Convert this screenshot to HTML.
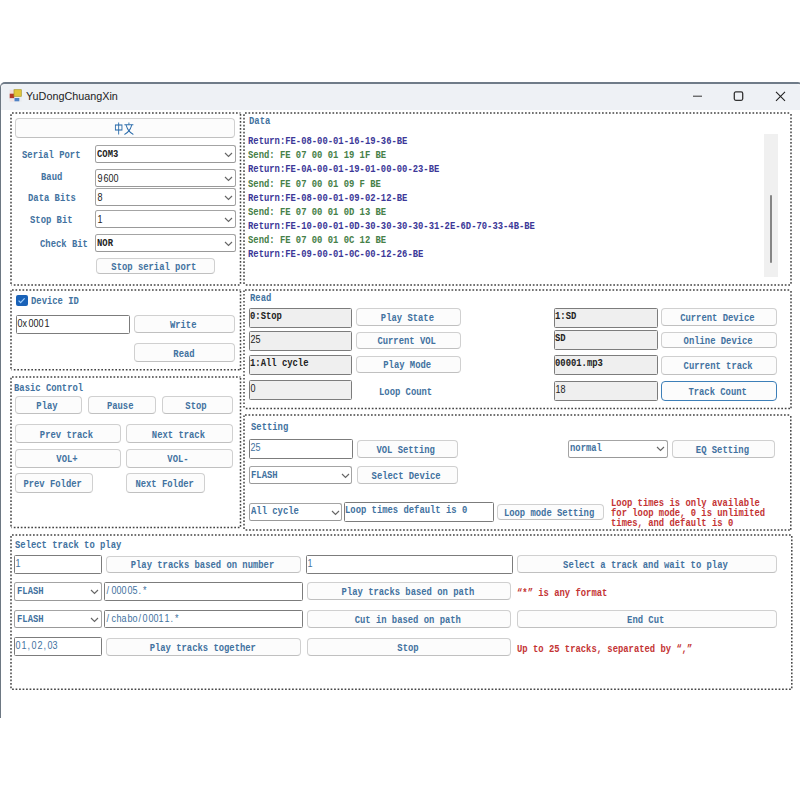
<!DOCTYPE html><html><head><meta charset="utf-8"><style>
*{margin:0;padding:0;box-sizing:border-box}
html,body{width:800px;height:800px;background:#fff;overflow:hidden;position:relative}
#root{position:absolute;left:0;top:0;width:800px;height:800px}
body{font-family:"Liberation Mono",monospace;font-size:10.8px;letter-spacing:0px}
.win{position:absolute;left:0;top:81.5px;width:802.5px;height:636.5px;border:1.3px solid #6d7883;border-top:2px solid #6f7b88;border-bottom:none;border-radius:5px 5px 0 0;background:#fff}
.title{position:absolute;left:1px;top:83.5px;width:800px;height:26.5px;background:#eef1f5;border-radius:5px 5px 0 0}
.ttl{position:absolute;left:26px;top:89px;font-family:"Liberation Sans",sans-serif;font-size:10.8px;letter-spacing:0;color:#222;line-height:14px}
.gs{position:absolute}
.grpold{position:absolute;
background:
 repeating-linear-gradient(90deg,#505050 0 1.6px,transparent 1.6px 3.55px) left top/100% 1.5px no-repeat,
 repeating-linear-gradient(90deg,#505050 0 1.6px,transparent 1.6px 3.55px) left bottom/100% 1.5px no-repeat,
 repeating-linear-gradient(180deg,#505050 0 1.6px,transparent 1.6px 3.55px) left top/1.5px 100% no-repeat,
 repeating-linear-gradient(180deg,#505050 0 1.6px,transparent 1.6px 3.55px) right top/1.5px 100% no-repeat;}
.btn{position:absolute;border:1px solid #d0d0d0;border-bottom-color:#c0c0c0;border-radius:4px;background:#fcfcfc;display:flex;align-items:center;justify-content:center;color:#4272a0;font-weight:bold;white-space:pre}
.btn.foc{border:1.5px solid #3d7fb8}
.btn span{line-height:12px;position:relative;top:1px;left:-1.3px;display:inline-block;transform:scaleX(0.82);transform-origin:50% 50%}
.tb{position:absolute;border:1.5px solid #7c7c7c;border-radius:1.5px;background:#fff;display:flex;align-items:flex-start;white-space:pre}
.bd span{font-weight:bold}
.ms span{transform:none!important;font-family:'Liberation Sans',sans-serif;font-size:10.6px}
.ms i{font-style:normal;display:inline-block;width:5.32px;text-align:center;transform:scaleX(0.85)}
.tb.ro{background:#efefef}
.tb span{position:relative;left:0px;top:1px;line-height:12px;display:inline-block;transform:scaleX(0.82);transform-origin:0 50%}
.cb{position:absolute;border:1.2px solid #a4a4a4;border-bottom-color:#999;border-radius:2.5px;background:#fff;white-space:pre}
.cb span{position:absolute;left:1.3px;top:1.8px;line-height:12px;transform:scaleX(0.82);transform-origin:0 50%}
.chev{position:absolute;right:1.6px;top:50%;margin-top:-2.3px}
.lab{position:absolute;white-space:pre;line-height:12px;font-weight:bold;transform:scaleX(0.82);transform-origin:0 50%}
.red{position:absolute;white-space:pre;line-height:9.7px;font-weight:bold;color:#c43434;transform:scaleX(0.82);transform-origin:0 0}
</style></head><body><div id="root">
<div class="win"></div><div class="title"></div>
<svg style="position:absolute;left:9px;top:89px" width="13" height="13" viewBox="0 0 13 13">
<rect x="0.3" y="0.5" width="12.4" height="12.3" fill="#e9ecef"/>
<rect x="0.8" y="1" width="4.6" height="4" fill="#f2dede"/>
<rect x="0.7" y="4.7" width="4.5" height="4.6" fill="#b53a28"/>
<rect x="0.8" y="9.5" width="4.6" height="3" fill="#f4e4e4"/>
<rect x="5" y="0.7" width="7.3" height="6.6" fill="#e3c63a" stroke="#a89a2a" stroke-width="0.7"/>
<rect x="5.5" y="9" width="4.8" height="3.3" fill="#4f82c6"/></svg>
<div class="ttl">YuDongChuangXin</div>
<svg style="position:absolute;left:690px;top:88px" width="100" height="16" viewBox="0 0 100 16">
<line x1="3" y1="8.2" x2="12" y2="8.2" stroke="#333" stroke-width="1"/>
<rect x="44.3" y="3.9" width="8.4" height="8.4" rx="1.5" fill="none" stroke="#333" stroke-width="1.3"/>
<path d="M86 3.8 L95 12.8 M95 3.8 L86 12.8" stroke="#222" stroke-width="1.1"/></svg>
<svg class="gs" style="left:8.6px;top:111px" width="233.5" height="175.9"><g stroke="#444" stroke-width="1.5" stroke-dasharray="1.7 1.8" fill="none"><path d="M3 2 H231.5 M231.5 3 V173.9 M230.5 173.9 H2.5 M2 172.9 V2.5"/></g></svg>
<svg class="gs" style="left:8.6px;top:288.3px" width="233.5" height="83.7"><g stroke="#444" stroke-width="1.5" stroke-dasharray="1.7 1.8" fill="none"><path d="M3 2 H231.5 M231.5 3 V81.7 M230.5 81.7 H2.5 M2 80.7 V2.5"/></g></svg>
<svg class="gs" style="left:8.6px;top:374.5px" width="233.5" height="154.5"><g stroke="#444" stroke-width="1.5" stroke-dasharray="1.7 1.8" fill="none"><path d="M3 2 H231.5 M231.5 3 V152.5 M230.5 152.5 H2.5 M2 151.5 V2.5"/></g></svg>
<svg class="gs" style="left:8.6px;top:533px" width="784.8" height="158.2"><g stroke="#444" stroke-width="1.5" stroke-dasharray="1.7 1.8" fill="none"><path d="M3 2 H782.8 M782.8 3 V156.2 M781.8 156.2 H2.5 M2 155.2 V2.5"/></g></svg>
<svg class="gs" style="left:242.4px;top:111px" width="551.0" height="176"><g stroke="#444" stroke-width="1.5" stroke-dasharray="1.7 1.8" fill="none"><path d="M3 2 H549.0 M549.0 3 V174 M548.0 174 H2.5 M2 173 V2.5"/></g></svg>
<svg class="gs" style="left:242.4px;top:287.5px" width="551.0" height="122.6"><g stroke="#444" stroke-width="1.5" stroke-dasharray="1.7 1.8" fill="none"><path d="M3 2 H549.0 M549.0 3 V120.6 M548.0 120.6 H2.5 M2 119.6 V2.5"/></g></svg>
<svg class="gs" style="left:242.4px;top:413.4px" width="550.8" height="119.0"><g stroke="#444" stroke-width="1.5" stroke-dasharray="1.7 1.8" fill="none"><path d="M3 2 H548.8 M548.8 3 V117.0 M547.8 117.0 H2.5 M2 116.0 V2.5"/></g></svg>
<div class="btn" style="left:15.3px;top:117.8px;width:219.8px;height:20.4px"><span><svg width="24" height="13" viewBox="0 0 24 13" style="display:block"><g fill="none" stroke="#2b6cab" stroke-width="1.1"><rect x="1.5" y="3" width="8" height="5"/><line x1="5.5" y1="0.5" x2="5.5" y2="12.5"/><line x1="18" y1="0.5" x2="18" y2="2.5"/><line x1="12.5" y1="2.8" x2="23.5" y2="2.8"/><path d="M14.5 3 Q17 10 23.5 12.5"/><path d="M21.5 3 Q19 10 12.5 12.5"/></g></svg></span></div>
<div class="lab" style="left:21.8px;top:149.3px;color:#4272a0">Serial Port</div>
<div class="cb bd" style="left:94.9px;top:145.0px;width:141.1px;height:18.3px;color:#222"><span>COM3</span><svg class="chev" width="9" height="6" viewBox="0 0 9 6"><path d="M1 1 L4.5 4.5 L8 1" fill="none" stroke="#666" stroke-width="1.15"/></svg></div>
<div class="lab" style="left:41.3px;top:171.2px;color:#4272a0">Baud</div>
<div class="cb ms" style="left:94.9px;top:169.0px;width:141.1px;height:18.4px;color:#222"><span><i>9</i><i>6</i><i>0</i><i>0</i></span><svg class="chev" width="9" height="6" viewBox="0 0 9 6"><path d="M1 1 L4.5 4.5 L8 1" fill="none" stroke="#666" stroke-width="1.15"/></svg></div>
<div class="lab" style="left:27.5px;top:191.9px;color:#4272a0">Data Bits</div>
<div class="cb ms" style="left:94.9px;top:188.2px;width:141.1px;height:17.6px;color:#222"><span><i>8</i></span><svg class="chev" width="9" height="6" viewBox="0 0 9 6"><path d="M1 1 L4.5 4.5 L8 1" fill="none" stroke="#666" stroke-width="1.15"/></svg></div>
<div class="lab" style="left:30.0px;top:214.2px;color:#4272a0">Stop Bit</div>
<div class="cb ms" style="left:94.9px;top:210.4px;width:141.1px;height:17.6px;color:#222"><span><i>1</i></span><svg class="chev" width="9" height="6" viewBox="0 0 9 6"><path d="M1 1 L4.5 4.5 L8 1" fill="none" stroke="#666" stroke-width="1.15"/></svg></div>
<div class="lab" style="left:39.7px;top:237.9px;color:#4272a0">Check Bit</div>
<div class="cb bd" style="left:94.9px;top:233.8px;width:141.1px;height:18.3px;color:#222"><span>NOR</span><svg class="chev" width="9" height="6" viewBox="0 0 9 6"><path d="M1 1 L4.5 4.5 L8 1" fill="none" stroke="#666" stroke-width="1.15"/></svg></div>
<div class="btn" style="left:96.0px;top:258.0px;width:119.0px;height:16.1px"><span>Stop serial port</span></div>
<div style="position:absolute;left:16.2px;top:294.6px;width:11.4px;height:11.1px;background:#1a62b8;border-radius:2px"><svg width="11" height="11" viewBox="0 0 11 11" style="display:block"><path d="M2.6 5.6 L4.6 7.6 L8.6 3.4" fill="none" stroke="#9fd0ff" stroke-width="1.2"/></svg></div>
<div class="lab" style="left:31.3px;top:294.7px;color:#4272a0">Device ID</div>
<div class="tb ms" style="left:16.05px;top:314.55px;width:114.1px;height:19.3px;color:#222"><span><i>0</i><i>x</i><i>0</i><i>0</i><i>0</i><i>1</i></span></div>
<div class="btn" style="left:134.1px;top:314.5px;width:101.4px;height:18.3px"><span>Write</span></div>
<div class="btn" style="left:134.1px;top:343.2px;width:101.4px;height:19.3px"><span>Read</span></div>
<div class="lab" style="left:13.7px;top:381.5px;color:#4272a0">Basic Control</div>
<div class="btn" style="left:14.9px;top:396.3px;width:67.6px;height:17.7px"><span>Play</span></div>
<div class="btn" style="left:88.1px;top:396.3px;width:67.8px;height:17.7px"><span>Pause</span></div>
<div class="btn" style="left:161.7px;top:396.3px;width:70.9px;height:17.7px"><span>Stop</span></div>
<div class="btn" style="left:14.9px;top:424.1px;width:105.8px;height:18.9px"><span>Prev track</span></div>
<div class="btn" style="left:126.1px;top:424.1px;width:107.3px;height:18.9px"><span>Next track</span></div>
<div class="btn" style="left:14.9px;top:448.7px;width:105.8px;height:19.1px"><span>VOL+</span></div>
<div class="btn" style="left:126.1px;top:448.7px;width:107.3px;height:19.1px"><span>VOL-</span></div>
<div class="btn" style="left:14.9px;top:473.3px;width:78.6px;height:19.7px"><span>Prev Folder</span></div>
<div class="btn" style="left:126.3px;top:473.3px;width:78.4px;height:19.7px"><span>Next Folder</span></div>
<div class="lab" style="left:248.5px;top:115.3px;color:#4272a0">Data</div>
<div class="lab" style="left:247.6px;top:135.1px;color:#3c3898">Return:FE-08-00-01-16-19-36-BE</div>
<div class="lab" style="left:247.6px;top:149.27px;color:#468048">Send: FE 07 00 01 19 1F BE</div>
<div class="lab" style="left:247.6px;top:163.44px;color:#3c3898">Return:FE-0A-00-01-19-01-00-00-23-BE</div>
<div class="lab" style="left:247.6px;top:177.61px;color:#468048">Send: FE 07 00 01 09 F BE</div>
<div class="lab" style="left:247.6px;top:191.78px;color:#3c3898">Return:FE-08-00-01-09-02-12-BE</div>
<div class="lab" style="left:247.6px;top:205.95px;color:#468048">Send: FE 07 00 01 0D 13 BE</div>
<div class="lab" style="left:247.6px;top:220.12px;color:#3c3898">Return:FE-10-00-01-0D-30-30-30-30-31-2E-6D-70-33-4B-BE</div>
<div class="lab" style="left:247.6px;top:234.29px;color:#468048">Send: FE 07 00 01 0C 12 BE</div>
<div class="lab" style="left:247.6px;top:248.46px;color:#3c3898">Return:FE-09-00-01-0C-00-12-26-BE</div>
<div style="position:absolute;left:763.6px;top:133.6px;width:14.4px;height:143px;background:#f0f0f0"></div>
<div style="position:absolute;left:770px;top:195px;width:1.6px;height:67.6px;background:#858585;border-radius:1px"></div>
<div class="lab" style="left:250.1px;top:291.9px;color:#4272a0">Read</div>
<div class="tb ro bd" style="left:248.65px;top:308.15px;width:103.4px;height:19.4px;color:#222"><span>0:Stop</span></div>
<div class="tb ro ms" style="left:248.65px;top:331.25px;width:103.4px;height:19.4px;color:#222"><span><i>2</i><i>5</i></span></div>
<div class="tb ro bd" style="left:248.65px;top:354.85px;width:103.4px;height:19.8px;color:#222"><span>1:All cycle</span></div>
<div class="tb ro ms" style="left:248.65px;top:380.45px;width:103.4px;height:19.9px;color:#222"><span><i>0</i></span></div>
<div class="btn" style="left:355.6px;top:308.4px;width:105.3px;height:18.0px"><span>Play State</span></div>
<div class="btn" style="left:355.6px;top:332.0px;width:105.3px;height:16.8px"><span>Current VOL</span></div>
<div class="btn" style="left:355.6px;top:355.7px;width:105.3px;height:17.4px"><span>Play Mode</span></div>
<div class="lab" style="left:379.4px;top:386.1px;color:#4272a0">Loop Count</div>
<div class="tb ro bd" style="left:553.65px;top:307.65px;width:104.0px;height:20.2px;color:#222"><span>1:SD</span></div>
<div class="tb ro bd" style="left:553.65px;top:330.35px;width:104.0px;height:19.6px;color:#222"><span>SD</span></div>
<div class="tb ro bd" style="left:553.65px;top:354.85px;width:104.0px;height:19.9px;color:#222"><span>00001.mp3</span></div>
<div class="tb ro ms" style="left:553.65px;top:380.65px;width:104.0px;height:20.0px;color:#222"><span><i>1</i><i>8</i></span></div>
<div class="btn" style="left:661.3px;top:308.4px;width:115.6px;height:18.0px"><span>Current Device</span></div>
<div class="btn" style="left:661.3px;top:332.4px;width:115.6px;height:15.9px"><span>Online Device</span></div>
<div class="btn" style="left:661.3px;top:355.7px;width:115.6px;height:19.2px"><span>Current track</span></div>
<div class="btn foc" style="left:661.05px;top:380.65px;width:116.1px;height:20.0px"><span>Track Count</span></div>
<div class="lab" style="left:250.8px;top:420.9px;color:#4272a0">Setting</div>
<div class="tb ms" style="left:248.85px;top:439.35px;width:103.9px;height:19.6px;color:#4272a0"><span><i>2</i><i>5</i></span></div>
<div class="btn" style="left:356.6px;top:439.8px;width:101.2px;height:17.8px"><span>VOL Setting</span></div>
<div class="cb bd" style="left:249.0px;top:466.3px;width:103.3px;height:18.2px;color:#4272a0"><span>FLASH</span><svg class="chev" width="9" height="6" viewBox="0 0 9 6"><path d="M1 1 L4.5 4.5 L8 1" fill="none" stroke="#666" stroke-width="1.15"/></svg></div>
<div class="btn" style="left:356.6px;top:466.4px;width:101.2px;height:17.9px"><span>Select Device</span></div>
<div class="cb bd" style="left:568.2px;top:439.6px;width:99.8px;height:18.4px;color:#4272a0"><span>normal</span><svg class="chev" width="9" height="6" viewBox="0 0 9 6"><path d="M1 1 L4.5 4.5 L8 1" fill="none" stroke="#666" stroke-width="1.15"/></svg></div>
<div class="btn" style="left:671.9px;top:439.5px;width:103.0px;height:18.2px"><span>EQ Setting</span></div>
<div class="cb bd" style="left:249.0px;top:502.5px;width:93.1px;height:18.7px;color:#4272a0"><span>All cycle</span><svg class="chev" width="9" height="6" viewBox="0 0 9 6"><path d="M1 1 L4.5 4.5 L8 1" fill="none" stroke="#666" stroke-width="1.15"/></svg></div>
<div class="tb bd" style="left:344.25px;top:502.35px;width:149.4px;height:19.6px;color:#4272a0"><span>Loop times default is 0</span></div>
<div class="btn" style="left:497.4px;top:503.9px;width:106.5px;height:16.0px"><span>Loop mode Setting</span></div>
<div class="red" style="left:611px;top:499.3px">Loop times is only available
for loop mode, 0 is unlimited
times, and default is 0</div>
<div class="lab" style="left:15.0px;top:538.6px;color:#4272a0">Select track to play</div>
<div class="tb ms" style="left:14.25px;top:554.85px;width:87.5px;height:18.9px;color:#4272a0"><span><i>1</i></span></div>
<div class="btn" style="left:106.1px;top:555.5px;width:195.4px;height:17.4px"><span>Play tracks based on number</span></div>
<div class="tb ms" style="left:305.65px;top:554.65px;width:207.1px;height:19.5px;color:#4272a0"><span><i>1</i></span></div>
<div class="btn" style="left:517.1px;top:555.1px;width:260.0px;height:17.8px"><span>Select a track and wait to play</span></div>
<div class="cb bd" style="left:14.4px;top:582.4px;width:87.2px;height:18.2px;color:#4272a0"><span>FLASH</span><svg class="chev" width="9" height="6" viewBox="0 0 9 6"><path d="M1 1 L4.5 4.5 L8 1" fill="none" stroke="#666" stroke-width="1.15"/></svg></div>
<div class="tb ms" style="left:104.25px;top:582.25px;width:198.5px;height:18.9px;color:#4272a0"><span><i>/</i><i>0</i><i>0</i><i>0</i><i>0</i><i>5</i><i>.</i><i>*</i></span></div>
<div class="btn" style="left:307.1px;top:582.1px;width:204.4px;height:18.4px"><span>Play tracks based on path</span></div>
<div class="lab" style="left:517.1px;top:586.5px;color:#c43434">“*” is any format</div>
<div class="cb bd" style="left:14.4px;top:609.8px;width:87.2px;height:18.4px;color:#4272a0"><span>FLASH</span><svg class="chev" width="9" height="6" viewBox="0 0 9 6"><path d="M1 1 L4.5 4.5 L8 1" fill="none" stroke="#666" stroke-width="1.15"/></svg></div>
<div class="tb ms" style="left:104.25px;top:609.65px;width:198.5px;height:18.7px;color:#4272a0"><span><i>/</i><i>c</i><i>h</i><i>a</i><i>b</i><i>o</i><i>/</i><i>0</i><i>0</i><i>0</i><i>1</i><i>1</i><i>.</i><i>*</i></span></div>
<div class="btn" style="left:307.1px;top:609.9px;width:204.4px;height:18.2px"><span>Cut in based on path</span></div>
<div class="btn" style="left:517.1px;top:609.9px;width:260.0px;height:18.2px"><span>End Cut</span></div>
<div class="tb ms" style="left:14.25px;top:637.25px;width:87.5px;height:19.1px;color:#4272a0"><span><i>0</i><i>1</i><i>,</i><i>0</i><i>2</i><i>,</i><i>0</i><i>3</i></span></div>
<div class="btn" style="left:106.1px;top:637.5px;width:195.4px;height:18.6px"><span>Play tracks together</span></div>
<div class="btn" style="left:307.1px;top:637.5px;width:204.4px;height:18.6px"><span>Stop</span></div>
<div class="lab" style="left:517.1px;top:642.5px;color:#c43434">Up to 25 tracks, separated by “,”</div>
</div></body></html>
